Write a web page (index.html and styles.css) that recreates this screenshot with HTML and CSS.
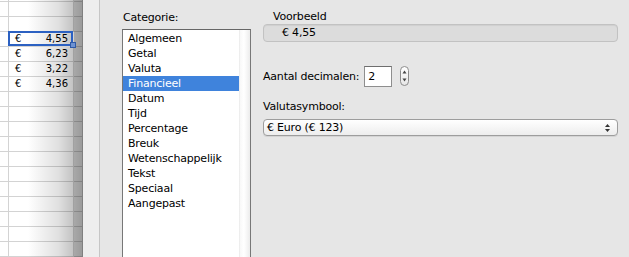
FILE: index.html
```html
<!DOCTYPE html>
<html>
<head>
    <meta charset="UTF-8">
    <title>Celopmaak</title>
    <link rel="stylesheet" href="styles.css">
</head>
<body>
    <div class="app">
        <div class="sheet">
            <div class="rows">
                <div class="row"><div class="c0"></div><div class="c1"></div><div class="c2"></div></div>
                <div class="row"><div class="c0"></div><div class="c1"></div><div class="c2"></div></div>
                <div class="row"><div class="c0"></div><div class="c1"></div><div class="c2"></div></div>
                <div class="row"><div class="c0"></div><div class="c1 sel"><span>€</span><span>4,55</span></div><div class="c2"></div></div>
                <div class="row"><div class="c0"></div><div class="c1"><span>€</span><span>6,23</span></div><div class="c2"></div></div>
                <div class="row"><div class="c0"></div><div class="c1"><span>€</span><span>3,22</span></div><div class="c2"></div></div>
                <div class="row"><div class="c0"></div><div class="c1"><span>€</span><span>4,36</span></div><div class="c2"></div></div>
                <div class="row"><div class="c0"></div><div class="c1"></div><div class="c2"></div></div>
                <div class="row"><div class="c0"></div><div class="c1"></div><div class="c2"></div></div>
                <div class="row"><div class="c0"></div><div class="c1"></div><div class="c2"></div></div>
                <div class="row"><div class="c0"></div><div class="c1"></div><div class="c2"></div></div>
                <div class="row"><div class="c0"></div><div class="c1"></div><div class="c2"></div></div>
                <div class="row"><div class="c0"></div><div class="c1"></div><div class="c2"></div></div>
                <div class="row"><div class="c0"></div><div class="c1"></div><div class="c2"></div></div>
                <div class="row"><div class="c0"></div><div class="c1"></div><div class="c2"></div></div>
                <div class="row"><div class="c0"></div><div class="c1"></div><div class="c2"></div></div>
                <div class="row"><div class="c0"></div><div class="c1"></div><div class="c2"></div></div>
                <div class="row"><div class="c0"></div><div class="c1"></div><div class="c2"></div></div>
                <div class="row"><div class="c0"></div><div class="c1"></div><div class="c2"></div></div>
            </div>
        </div>
        <div class="gutter"></div>
        <div class="dialog">
            <div class="cat">
                <div class="lbl">Categorie:</div>
                <div class="list">
                    <ul class="items">
                        <li>Algemeen</li>
                        <li>Getal</li>
                        <li>Valuta</li>
                        <li class="on">Financieel</li>
                        <li>Datum</li>
                        <li>Tijd</li>
                        <li>Percentage</li>
                        <li>Breuk</li>
                        <li>Wetenschappelijk</li>
                        <li>Tekst</li>
                        <li>Speciaal</li>
                        <li>Aangepast</li>
                    </ul>
                    <div class="scroller"></div>
                </div>
            </div>
            <div class="opts">
                <div class="lbl ind">Voorbeeld</div>
                <div class="preview">€ 4,55</div>
                <div class="dec">
                    <span class="lbl">Aantal decimalen:</span>
                    <div class="num">2</div>
                    <svg class="step" width="10" height="21" viewBox="0 0 10 21">
                        <defs>
                            <linearGradient id="sg" x1="0" y1="0" x2="0" y2="1">
                                <stop offset="0" stop-color="#ffffff"/>
                                <stop offset="1" stop-color="#e6e6e6"/>
                            </linearGradient>
                        </defs>
                        <rect x="0.5" y="0.5" width="8" height="19" rx="4" fill="url(#sg)" stroke="#8c8c8c"/>
                        <polygon points="2.5,7.5 4.5,4.5 6.5,7.5" fill="#444"/>
                        <polygon points="2.5,12.5 4.5,15.5 6.5,12.5" fill="#444"/>
                    </svg>
                </div>
                <div class="lbl">Valutasymbool:</div>
                <div class="select">
                    <span>€ Euro (€ 123)</span>
                    <svg width="7" height="10" viewBox="0 0 7 10">
                        <polygon points="1,4 3.5,1 6,4" fill="#333"/>
                        <polygon points="1,6 3.5,9 6,6" fill="#333"/>
                    </svg>
                </div>
            </div>
        </div>
    </div>
</body>
</html>
```
FILE: styles.css
```css
body {
    margin: 0;
    overflow: hidden;
    font-family: "DejaVu Sans", sans-serif;
    background: #e6e6e6;
}

.app {
    display: flex;
    height: 257px;
    overflow: hidden;
}

/* spreadsheet behind the sheet */
.sheet {
    position: relative;
    width: 83px;
    background: #fff;
    overflow: hidden;
}

.sheet::after {
    content: "";
    position: absolute;
    top: 0;
    bottom: 0;
    left: 28px;
    right: 0;
    background: linear-gradient(to right, rgba(0,0,0,0) 0, rgba(0,0,0,.12) 55%, rgba(0,0,0,.24) 83%, rgba(0,0,0,.34) 84%, rgba(0,0,0,.4) 100%);
}

.rows {
    margin-top: -13px;
}

.row {
    display: grid;
    grid-template-columns: 9px 65px 9px;
    height: 15px;
}

.row > div {
    border-right: 1px solid #d3d3d3;
    border-bottom: 1px solid #d3d3d3;
}

.c1 {
    display: flex;
    justify-content: space-between;
    padding: 0 5px 0 6px;
    font-size: 10px;
    line-height: 14px;
    color: #000;
}

.sel {
    position: relative;
    z-index: 2;
}

.sel::before {
    content: "";
    position: absolute;
    left: -1px;
    top: -1px;
    right: 0;
    bottom: 0;
    border: 2px solid #2c61c2;
}

.sel::after {
    content: "";
    position: absolute;
    right: -3px;
    bottom: -2px;
    width: 4px;
    height: 4px;
    background: #6d92d2;
    border: 1px solid #2f5aa6;
}

.gutter {
    width: 16px;
    background: #eeeeee;
    border-right: 1px solid #c6c6c6;
}

/* format dialog */
.dialog {
    flex: 1;
    display: flex;
    gap: 12px;
    padding: 10px 11px 0 22px;
    font-size: 11px;
    letter-spacing: -0.2px;
    color: #000;
}

.lbl {
    line-height: 15px;
}

.cat {
    width: 129px;
}

.cat .lbl {
    margin: 0 0 4px 1px;
}

.list {
    display: flex;
    height: 240px;
    background: #fff;
    border: 1px solid #777;
    border-top-color: #666;
}

.items {
    flex: 1;
    list-style: none;
    margin: 0;
    padding: 1px 0 0;
}

.items li {
    height: 15px;
    line-height: 15px;
    padding-left: 5px;
}

.items .on {
    background: #3f83dc;
    color: #fff;
}

.scroller {
    width: 11px;
    background: linear-gradient(to right, #e3e3e3 0, #f8f8f8 1px, #ffffff 45%, #ececec 100%);
}

.opts {
    flex: 1;
}

.ind {
    padding-left: 10px;
    line-height: 14px;
}

.preview {
    height: 16px;
    line-height: 16px;
    padding-left: 18px;
    background: #dcdcdc;
    border: 1px solid #c2c2c2;
    border-radius: 4px;
    box-shadow: inset 0 1px 1px rgba(0,0,0,.06);
}

.dec {
    display: flex;
    align-items: center;
    margin-top: 24px;
    height: 21px;
}

.num {
    width: 23px;
    height: 19px;
    line-height: 19px;
    margin-left: 5px;
    padding-left: 3px;
    background: #fff;
    border: 1px solid #8e8e8e;
    border-top-color: #6e6e6e;
}

.step {
    margin-left: 8px;
}

.dec + .lbl {
    margin-top: 12px;
}

.select {
    display: flex;
    align-items: center;
    justify-content: space-between;
    margin-top: 5px;
    height: 15px;
    line-height: 15px;
    padding: 0 6px 0 3px;
    background: linear-gradient(#ffffff, #ededed);
    border: 1px solid #9d9d9d;
    border-radius: 4px;
    box-shadow: 0 1px 0 rgba(0,0,0,.08);
}
```
